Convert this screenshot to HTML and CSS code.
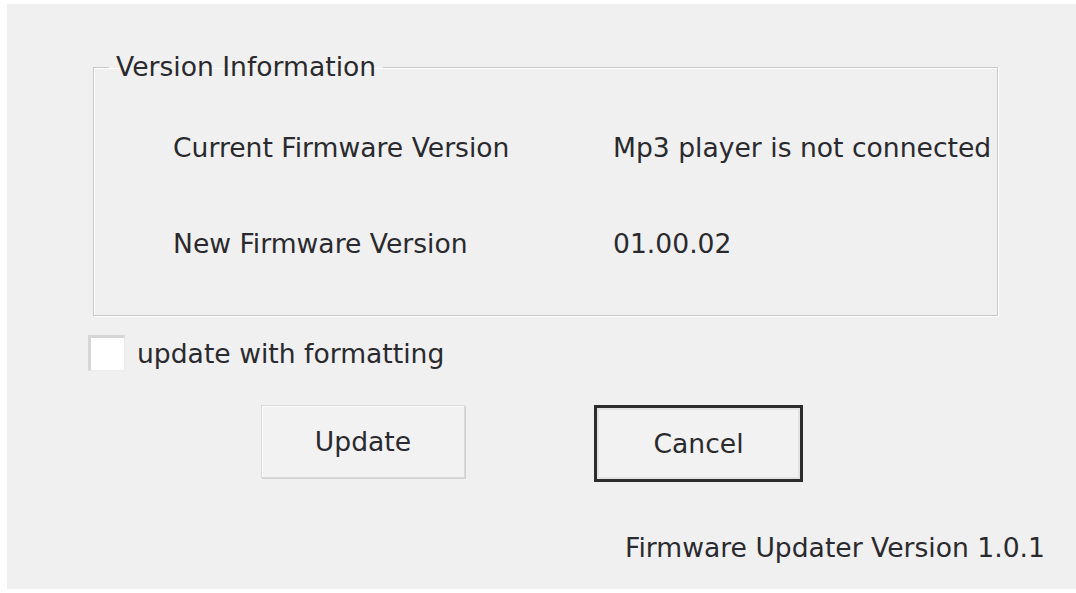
FILE: index.html
```html
<!DOCTYPE html>
<html lang="en">
<head>
<meta charset="utf-8">
<title>Firmware Updater</title>
<link rel="stylesheet" href="styles.css">
</head>
<body>
<div class="dialog">
  <fieldset class="group">
    <legend class="group-title">Version Information</legend>
    <div class="info-row">
      <span class="info-label">Current Firmware Version</span>
      <span class="info-value">Mp3 player is not connected</span>
    </div>
    <div class="info-row">
      <span class="info-label">New Firmware Version</span>
      <span class="info-value">01.00.02</span>
    </div>
  </fieldset>

  <label class="check-row">
    <span class="check-box"></span>
    <span class="check-text">update with formatting</span>
  </label>

  <div class="button-row">
    <button class="btn btn-update" type="button">Update</button>
    <button class="btn btn-cancel" type="button">Cancel</button>
  </div>

  <div class="footer">Firmware Updater Version 1.0.1</div>
</div>
</body>
</html>
```

FILE: styles.css
```css
html, body {
  margin: 0;
  padding: 0;
  background: #ffffff;
}

body {
  width: 1076px;
  height: 593px;
  overflow: hidden;
  font-family: "DejaVu Sans", sans-serif;
  font-size: 26.6px;
  color: #2a2a2e;
}

.dialog {
  box-sizing: border-box;
  margin: 4px 0 0 7px;
  width: 1069px;
  height: 585px;
  background: #f0f0f0;
  padding-top: 50px;
  display: flex;
  flex-direction: column;
}

/* etched group box */
.group {
  box-sizing: border-box;
  margin: 0 0 0 86px;
  width: 905px;
  height: 262px;
  padding: 0;
  border: 1px solid #c9c9c9;
  box-shadow: 1px 1px 0 #ffffff, inset 1px 1px 0 #ffffff;
}

.group-title {
  margin-left: 15px;
  padding: 0 7px 0 7px;
  line-height: 26px;
}

.info-row {
  display: flex;
  align-items: center;
  padding-left: 79px;
  height: 32px;
}

.info-row:first-of-type {
  margin-top: 51px;
}

.info-row + .info-row {
  margin-top: 64px;
}

.info-label {
  width: 440px;
}

.check-row {
  display: flex;
  align-items: center;
  gap: 12px;
  margin: 19px 0 0 81px;
  height: 36px;
}

.check-box {
  box-sizing: border-box;
  width: 37px;
  height: 36px;
  background: #ffffff;
  border-top: 3px solid #d6d6d6;
  border-left: 3px solid #d6d6d6;
  border-right: 1px solid #ececec;
  border-bottom: 1px solid #ececec;
}

.button-row {
  display: flex;
  align-items: flex-start;
  margin: 34px 0 0 254px;
}

.btn {
  box-sizing: border-box;
  font: inherit;
  color: inherit;
  background: #f2f2f2;
  padding: 0;
}

.btn-update {
  width: 204px;
  height: 73px;
  border: 1px solid #dadada;
  box-shadow: 1px 1px 0 #d0d0d0, inset 1px 1px 0 #fbfbfb;
}

.btn-cancel {
  margin-left: 129px;
  width: 209px;
  height: 77px;
  border: 3px solid #2c2c2c;
  box-shadow: inset 0 0 0 2px #e2e2e2;
}

.footer {
  align-self: flex-end;
  margin: 50px 31px 0 0;
}
```
